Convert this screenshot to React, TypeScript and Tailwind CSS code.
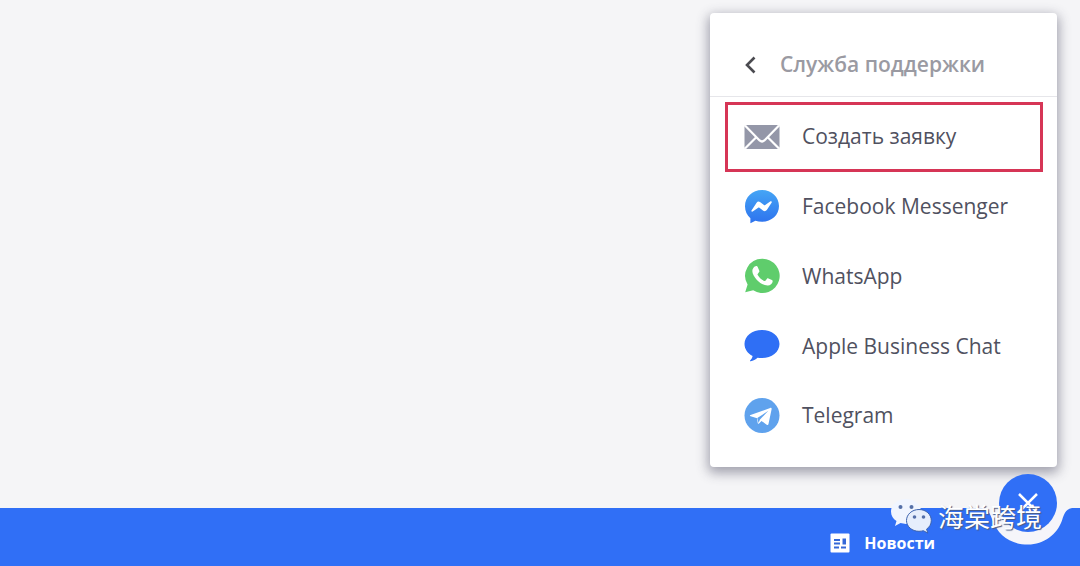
import type { ReactNode } from "react";

const MailIcon = () => (
  <svg className="w-9 h-9" viewBox="0 0 36 36" aria-hidden="true">
    <rect x="0.5" y="6" width="35" height="24" rx="2" fill="#9497a8" />
    <path
      d="M1 6.5 15.6 21.4Q18 23.6 20.4 21.4L35 6.5M1 29.5 12 18.5M35 29.5 24 18.5"
      fill="none"
      stroke="#fff"
      strokeWidth="2.2"
    />
  </svg>
);

const MessengerIcon = () => (
  <svg className="w-9 h-9" viewBox="0 0 36 36" aria-hidden="true">
    <defs>
      <linearGradient id="messenger" x1="0" y1="0" x2="0" y2="1">
        <stop offset="0" stopColor="#45a5f5" />
        <stop offset="1" stopColor="#2d72ee" />
      </linearGradient>
    </defs>
    <path
      d="M18 1C8.3 1 1 8 1 17.2c0 4.9 2 9.1 5.400 12V34.300l5-2.500c2 .7 4.200 1 6.600 1 9.700 0 17-6.700 17-15.700S27.700 1 18 1Z"
      fill="url(#messenger)"
    />
    <path
      d="M7.500 21.500 12.600 13.700c.8-1.200 2.300-1.500 3.400-.6l4 3c.4.3.8.3 1.200 0l5.300-3.800c.8-.5 1.700.3 1.200 1.100L22.800 21c-.8 1.200-2.400 1.500-3.500.7l-3.900-2.900c-.4-.3-.8-.3-1.200 0l-5.500 3.800c-.8.5-1.700-.3-1.200-1.100Z"
      fill="#fff"
    />
  </svg>
);

const WhatsAppIcon = () => (
  <svg className="w-9 h-9" viewBox="0 0 36 36" aria-hidden="true">
    <path
      d="M18.200.8A17 17 0 0 0 3.600 26.600L1.200 34.300l8-2.100A17.100 17.100 0 1 0 18.200.8Z"
      fill="#5fcd6c"
    />
    <path
      d="M9.200 10.200c.9-1.500 2.500-2.300 3.600-2.100.5.100.8.600 1 1.100l1.500 3.500c.2.600.1 1-.2 1.400l-1.400 1.800c-.3.400-.2.700 0 1.100 1.600 2.700 3.800 4.700 6.600 5.900.5.200.8.100 1.100-.2l1.600-2c.4-.5.8-.6 1.400-.3l3.500 1.700c.6.300.9.500.8 1.100-.2 2.500-2.600 4.300-5.100 4.200-3.500-.1-7.500-2.200-10.700-5.500-3.400-3.600-6-8.500-3.700-11.700Z"
      fill="#fff"
    />
  </svg>
);

const BusinessChatIcon = () => (
  <svg className="w-9 h-9" viewBox="0 0 36 36" aria-hidden="true">
    <path
      d="M18 2C8.200 2 .500 8.100.500 16c0 5 3.200 9.500 8.100 12-.3 1.700-1.200 3.200-2.500 4.600-.3.400 0 .8.500.700 2.600-.4 5-1.600 7-3.500 1.400.2 2.900.3 4.400.3 9.700 0 17.500-6.200 17.500-14.100S27.700 2 18 2Z"
      fill="#2f6ff5"
    />
  </svg>
);

const TelegramIcon = () => (
  <svg className="w-9 h-9" viewBox="0 0 36 36" aria-hidden="true">
    <circle cx="18" cy="17.500" r="17.500" fill="#5fa2ed" />
    <path
      d="M6.500 17.100 26.200 9.900c.9-.3 1.600.3 1.400 1.300L24.500 26c-.2 1.100-.9 1.300-1.800.8l-5.200-3.800-2.500 2.500c-.5.500-1.200.300-1.300-.5l-.6-4.700-6.500-2c-.9-.3-1-.8-.1-1.200Z"
      fill="#fff"
    />
    <path d="m13.300 20.100 11-7.300-8.300 8.700-1.400 3.600Z" fill="#5fa2ed" />
  </svg>
);

const NewsIcon = () => (
  <svg className="w-5 h-5" viewBox="0 0 20 20" aria-hidden="true">
    <rect x="0.5" y="0.500" width="19" height="19" rx="1" fill="#fff" />
    <path
      d="M4 7h6M4 10.500h6M4 14.500h5M11 14.500h5"
      fill="none"
      stroke="#3568d8"
      strokeWidth="1.800"
    />
    <path d="M12.500 5.500H16v6h-3.500Z" fill="#3568d8" />
  </svg>
);

const WeChatIcon = () => (
  <svg className="w-[42px] h-9" viewBox="0 0 42 36" aria-hidden="true">
    <path
      d="M16 1C7.500 1 1 6.500 1 13.400c0 4 2.100 7.400 5.500 9.700L5 28l5.500-2.900c1.800.5 3.600.8 5.500.8 8.500 0 15-5.500 15-12.500S24.500 1 16 1Z"
      fill="#f0f5ff"
    />
    <path
      d="M29 11.500c-7 0-12.500 4.900-12.500 11S22 33.300 29 33.300c1.600 0 3-.2 4.400-.6l4.400 2.400-1.200-4c2.900-2 4.700-5 4.700-8.600 0-6.100-5.300-11-12.300-11Z"
      fill="#e6eefc"
      stroke="#3b62ae"
      strokeWidth="1"
    />
    <g fill="#546fa8">
      <circle cx="10.500" cy="9" r="2" />
      <circle cx="21.500" cy="9" r="2" />
      <circle cx="24.500" cy="19" r="1.800" />
      <circle cx="33.500" cy="19" r="1.800" />
    </g>
  </svg>
);

const channels: { label: string; icon: ReactNode; active?: boolean }[] = [
  { label: "Создать заявку", icon: <MailIcon />, active: true },
  { label: "Facebook Messenger", icon: <MessengerIcon /> },
  { label: "WhatsApp", icon: <WhatsAppIcon /> },
  { label: "Apple Business Chat", icon: <BusinessChatIcon /> },
  { label: "Telegram", icon: <TelegramIcon /> },
];

const SupportPanel = () => (
  <section className="w-[347px] rounded-sm bg-white pb-4 shadow-[0_4px_12px_2px_rgba(60,60,85,0.45)]">
    <header className="flex h-[84px] items-center border-b border-[#e6e6ea] pt-5 pl-8">
      <button type="button" aria-label="Назад" className="flex w-[38px]">
        <svg className="w-4 h-5" viewBox="0 0 16 20" aria-hidden="true">
          <path
            d="M12.500 2.500 5 10l7.500 7.500"
            fill="none"
            stroke="#4b4b50"
            strokeWidth="2.600"
          />
        </svg>
      </button>
      <h2 className="text-[21px] font-semibold text-[#9a9aa2]">
        Служба поддержки
      </h2>
    </header>
    <ul className="mt-[5px] grid h-[349px] auto-rows-fr pr-[14px] pl-[15px]">
      {channels.map(({ label, icon, active }) => (
        <li key={label} className="flex">
          <button
            type="button"
            className={
              active
                ? "flex grow items-center gap-[22px] border-3 border-[#d63556] pl-4 text-left"
                : "flex grow items-center gap-[22px] border-3 border-transparent pl-4 text-left"
            }
          >
            {icon}
            <span className="text-[21px] text-[#505160]">{label}</span>
          </button>
        </li>
      ))}
    </ul>
  </section>
);

const Watermark = () => (
  <div className="pointer-events-none absolute right-[38px] bottom-8 flex items-center gap-[6px]">
    <WeChatIcon />
    <span
      lang="zh"
      className="font-['Noto_Sans_CJK_SC',sans-serif] text-[26px] leading-9 text-white [text-shadow:1px_1px_1px_#4d5c80]"
    >
      海棠跨境
    </span>
  </div>
);

export default function App() {
  return (
    <div className="relative flex min-h-screen flex-col bg-[#f5f5f7] font-['Open_Sans','Noto_Sans',sans-serif]">
      <main className="flex grow items-start justify-end pt-[13px] pr-[23px]">
        <SupportPanel />
      </main>
      <footer className="relative flex h-[58px] justify-end bg-[#306ff6] pt-3 pr-[145px]">
        <svg
          className="absolute top-0 right-0 h-[58px] w-[120px]"
          viewBox="0 0 120 58"
          aria-hidden="true"
        >
          <path
            d="M22 0C27 0 30 5 32 11c6 17 19 25.500 36 25.500 16 0 29-10 34-24C104.500 4 107 0 114 0Z"
            fill="#f5f5fa"
          />
        </svg>
        <a
          href="#news"
          className="flex h-[46px] items-center gap-[14px] text-base font-bold text-white"
        >
          <NewsIcon />
          Новости
        </a>
      </footer>
      <button
        type="button"
        aria-label="Закрыть"
        className="absolute right-[23px] bottom-[34px] flex size-[58px] items-center justify-center rounded-full bg-[#306ff6]"
      >
        <svg className="size-5" viewBox="0 0 20 20" aria-hidden="true">
          <path d="m1 1 18 18M19 1 1 19" stroke="#fff" strokeWidth="2.500" />
        </svg>
      </button>
      <Watermark />
    </div>
  );
}
